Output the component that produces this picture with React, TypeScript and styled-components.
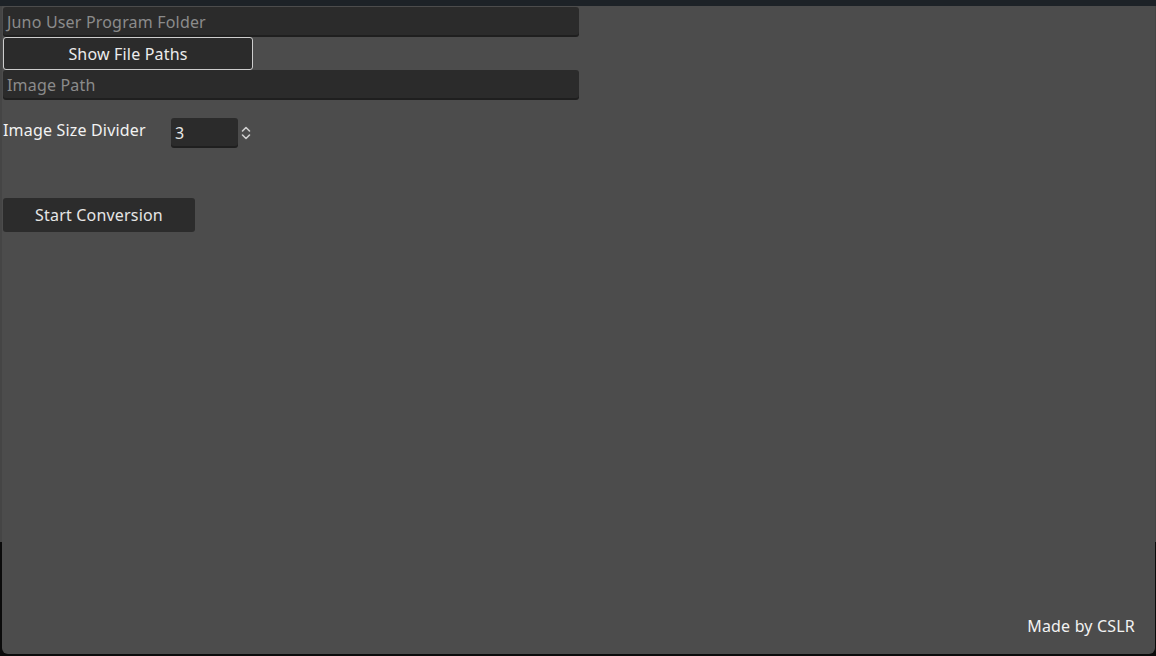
import React from "react";
import styled, { createGlobalStyle } from "styled-components";

const Global = createGlobalStyle`
  html, body { margin: 0; padding: 0; }
  body {
    width: 1156px;
    height: 656px;
    overflow: hidden;
    background: linear-gradient(to bottom, #1d2227 0 6px, #454545 6px 542px, #0b0b0b 542px);
    font-family: "Noto Sans", "Open Sans", sans-serif;
    letter-spacing: 0.18px;
  }
`;

const Window = styled.div`
  box-sizing: border-box;
  margin: 6px 1px 0 2px;
  height: 648px;
  background: #4c4c4c;
  border-radius: 0 0 6px 6px;
  padding: 1px 20px 17px 1px;
  display: flex;
  flex-direction: column;
`;

const Field = styled.div<{ $w: number; $ph?: boolean }>`
  box-sizing: border-box;
  width: ${(p) => p.$w}px;
  height: 28px;
  flex: none;
  background: #2b2b2b;
  border-radius: 3px;
  box-shadow: 0 2px 0 #1f1f1f;
  margin-bottom: 2px;
  padding: 2px 4px 0;
  display: flex;
  align-items: center;
  font-size: 16px;
  color: ${(p) => (p.$ph ? "#8b8b8b" : "#e8e8e8")};
`;

const OutlineButton = styled.div`
  box-sizing: border-box;
  width: 250px;
  height: 33px;
  flex: none;
  background: #2b2b2b;
  border: 1.5px solid #cdcdcd;
  border-radius: 3px;
  display: flex;
  align-items: center;
  justify-content: center;
  font-size: 16px;
  color: #ececec;
`;

const Row = styled.div`
  display: flex;
  align-items: flex-start;
  margin-top: 18px;
`;

const Label = styled.div`
  width: 168px;
  line-height: 22px;
  padding-top: 1px;
  font-size: 16px;
  color: #f2f2f2;
`;

const Spin = styled.div`
  display: flex;
  align-items: flex-start;
  gap: 3px;
`;

const Arrows = styled.svg`
  margin-top: 8px;
`;

const Button = styled.div`
  box-sizing: border-box;
  width: 192px;
  height: 34px;
  flex: none;
  margin-top: 50px;
  background: #2c2c2c;
  border-radius: 3px;
  display: flex;
  align-items: center;
  justify-content: center;
  font-size: 16px;
  color: #e6e6e6;
`;

const Credit = styled.div`
  margin-top: auto;
  align-self: flex-end;
  font-size: 16px;
  color: #f2f2f2;
`;

export default function App() {
  return (
    <>
      <Global />
      <Window>
        <Field $w={576} $ph>Juno User Program Folder</Field>
        <OutlineButton>Show File Paths</OutlineButton>
        <Field $w={576} $ph>Image Path</Field>
        <Row>
          <Label>Image Size Divider</Label>
          <Spin>
            <Field $w={67}>3</Field>
            <Arrows width="10" height="14" viewBox="0 0 10 14" fill="none" stroke="#cfcfcf" strokeWidth="1.6" strokeLinecap="round" strokeLinejoin="round">
              <polyline points="1.5,5 5,1.5 8.5,5" />
              <polyline points="1.5,9 5,12.5 8.5,9" />
            </Arrows>
          </Spin>
        </Row>
        <Button>Start Conversion</Button>
        <Credit>Made by CSLR</Credit>
      </Window>
    </>
  );
}
